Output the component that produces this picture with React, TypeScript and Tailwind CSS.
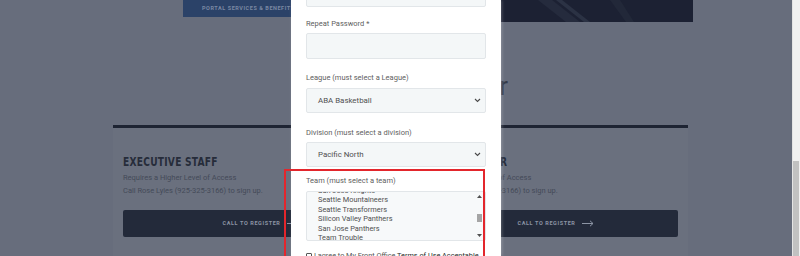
import React from 'react';

const teams = [
  'San Jose Knights',
  'Seattle Mountaineers',
  'Seattle Transformers',
  'Silicon Valley Panthers',
  'San Jose Panthers',
  'Team Trouble',
];

const cards = [
  { title: 'EXECUTIVE STAFF', phone: 'Call Rose Lyles (925-325-3166) to sign up.' },
  { title: 'STAFF MANAGER', phone: 'Call Rose Lyles (925-325-3166) to sign up.' },
];

function Chevron() {
  return (
    <svg width="7" height="5" viewBox="0 0 7 5" className="shrink-0">
      <path d="M1 1l2.5 2.5L6 1" fill="none" stroke="#4a4a4a" strokeWidth="1.1" />
    </svg>
  );
}

function Arrow() {
  return (
    <svg width="12" height="7" viewBox="0 0 12 7" className="ml-[7px] shrink-0">
      <path d="M0 3.5h11M8 0.8l3 2.7-3 2.7" fill="none" stroke="#8c94a4" strokeWidth="1" />
    </svg>
  );
}

function Field({ label, value, mt, selectMt, h }: { label: string; value?: string; mt: string; selectMt: string; h: string }) {
  return (
    <>
      <div className={`${mt} h-[12px] text-[7.5px] leading-[12px] text-[#5e5e5e]`}>{label}</div>
      <div className={`${selectMt} ${h} flex items-center justify-between rounded-[2px] border border-[#e2e6e9] bg-[#f4f7f8] pl-[11px] pr-[4px] text-[7.9px] text-[#505050]`}>
        <span>{value}</span>
        {value && <Chevron />}
      </div>
    </>
  );
}

export default function App() {
  return (
    <div className="flex h-[256px] w-[800px] overflow-hidden font-['Roboto',sans-serif]">
      <div className="relative h-full w-[792px] overflow-hidden bg-[#676d7c]">
        {/* hero strip */}
        <div className="flex h-[22px] items-start">
          <div className="ml-[183px] flex h-[17px] w-[160px] items-center bg-[#2b4268] pl-[19px] text-[5.5px] font-bold tracking-[0.55px] text-[#7a88a3]">
            PORTAL SERVICES &amp; BENEFITS
          </div>
          <div className="ml-auto mr-[99px] h-[22px] w-[273px] overflow-hidden bg-[#1c2133]">
            <svg width="273" height="22" viewBox="0 0 273 22">
              <polygon points="118,0 132,0 160,22 146,22" fill="#252b3d" />
              <polygon points="136,0 142,0 170,22 164,22" fill="#2b3244" />
              <polygon points="190,0 200,0 214,22 206,22" fill="#222839" />
            </svg>
          </div>
        </div>

        <div className="ml-[113px] w-[575px]">
          <h2 className="mt-[51px] pl-[5px] text-center text-[25px] leading-[28px] text-[#353a48]">Become a Member</h2>

          <div className="mt-[24px] flex gap-[15px]">
            {cards.map((c) => (
              <div key={c.title} className="h-[140px] w-[280px] border-t-[3px] border-[#1e2433] bg-[#6a707e] px-[10px] pt-[21px]">
                <div className="h-[15px] whitespace-nowrap">
                  <span className="inline-block origin-left scale-x-[0.81] font-['DejaVu_Sans_Condensed',sans-serif] text-[12.5px] font-bold leading-[15px] tracking-[0.3px] text-[#262c3a]">
                    {c.title}
                  </span>
                </div>
                <div className="mt-[7px] text-[7.5px] leading-[13px] text-[#444a58]">
                  <div>Requires a Higher Level of Access</div>
                  <div>{c.phone}</div>
                </div>
                <div className="mt-[13px] flex h-[27px] items-center justify-center rounded-[2px] bg-[#232a3a] pl-[16px] text-[5.5px] font-bold tracking-[0.6px] text-[#8c94a4]">
                  CALL TO REGISTER
                  <Arrow />
                </div>
              </div>
            ))}
          </div>
        </div>

        {/* modal */}
        <div className="absolute left-[291px] top-0 h-full w-[210px] bg-white px-[15px] shadow-[1px_0_3px_rgba(255,255,255,0.25)]">
          <div className="-mt-[19px] h-[26px] rounded-[2px] border border-[#e2e6e9] bg-[#f4f7f8]" />
          <Field label="Repeat Password *" mt="mt-[11px]" selectMt="mt-[3px]" h="h-[26px]" />
          <Field label="League (must select a League)" value="ABA Basketball" mt="mt-[13px]" selectMt="mt-[4px]" h="h-[25px]" />
          <Field label="Division (must select a division)" value="Pacific North" mt="mt-[14px]" selectMt="mt-[3px]" h="h-[25px]" />
          <div className="mt-[8px] h-[12px] text-[7.5px] leading-[12px] text-[#5e5e5e]">Team (must select a team)</div>
          <div className="mt-[4px] flex h-[50px] overflow-hidden rounded-[2px] border border-[#e2e6e9] bg-[#f7f9fa]">
            <div className="-mt-[6px] flex-1 pl-[11px] text-[7.4px] leading-[9.4px] text-[#505050]">
              {teams.map((t) => (
                <div key={t}>{t}</div>
              ))}
            </div>
            <div className="mr-[3px] flex w-[5px] flex-col items-center justify-between py-[3px]">
              <svg width="5" height="3" viewBox="0 0 5 3"><path d="M0 3L2.5 0 5 3z" fill="#505050" /></svg>
              <div className="mb-[11px] mt-[14px] h-[8px] w-[5px] bg-[#a5a5a5]" />
              <svg width="5" height="3" viewBox="0 0 5 3"><path d="M0 0L2.5 3 5 0z" fill="#505050" /></svg>
            </div>
          </div>
          <div className="mt-[10px] flex items-start gap-[2px] text-[7.3px] leading-[10px] text-[#555]">
            <div className="mt-[2px] h-[6px] w-[6px] shrink-0 rounded-[1px] border border-[#555] bg-white" />
            <span className="whitespace-nowrap">
              I agree to My Front Office <span className="text-[#2a2a2a]">Terms of Use Acceptable</span>
            </span>
          </div>
        </div>

        {/* highlight box */}
        <div className="absolute left-[284px] top-[169px] h-[100px] w-[201px] border-2 border-[#e3262c]" />
      </div>

      {/* page scrollbar */}
      <div className="flex w-[8px] flex-col border-l border-[#e4e4e4] bg-[#f1f1f1]">
        <div className="mt-[161px] h-[95px] w-[6px] bg-[#c1c1c1]" />
      </div>
    </div>
  );
}
